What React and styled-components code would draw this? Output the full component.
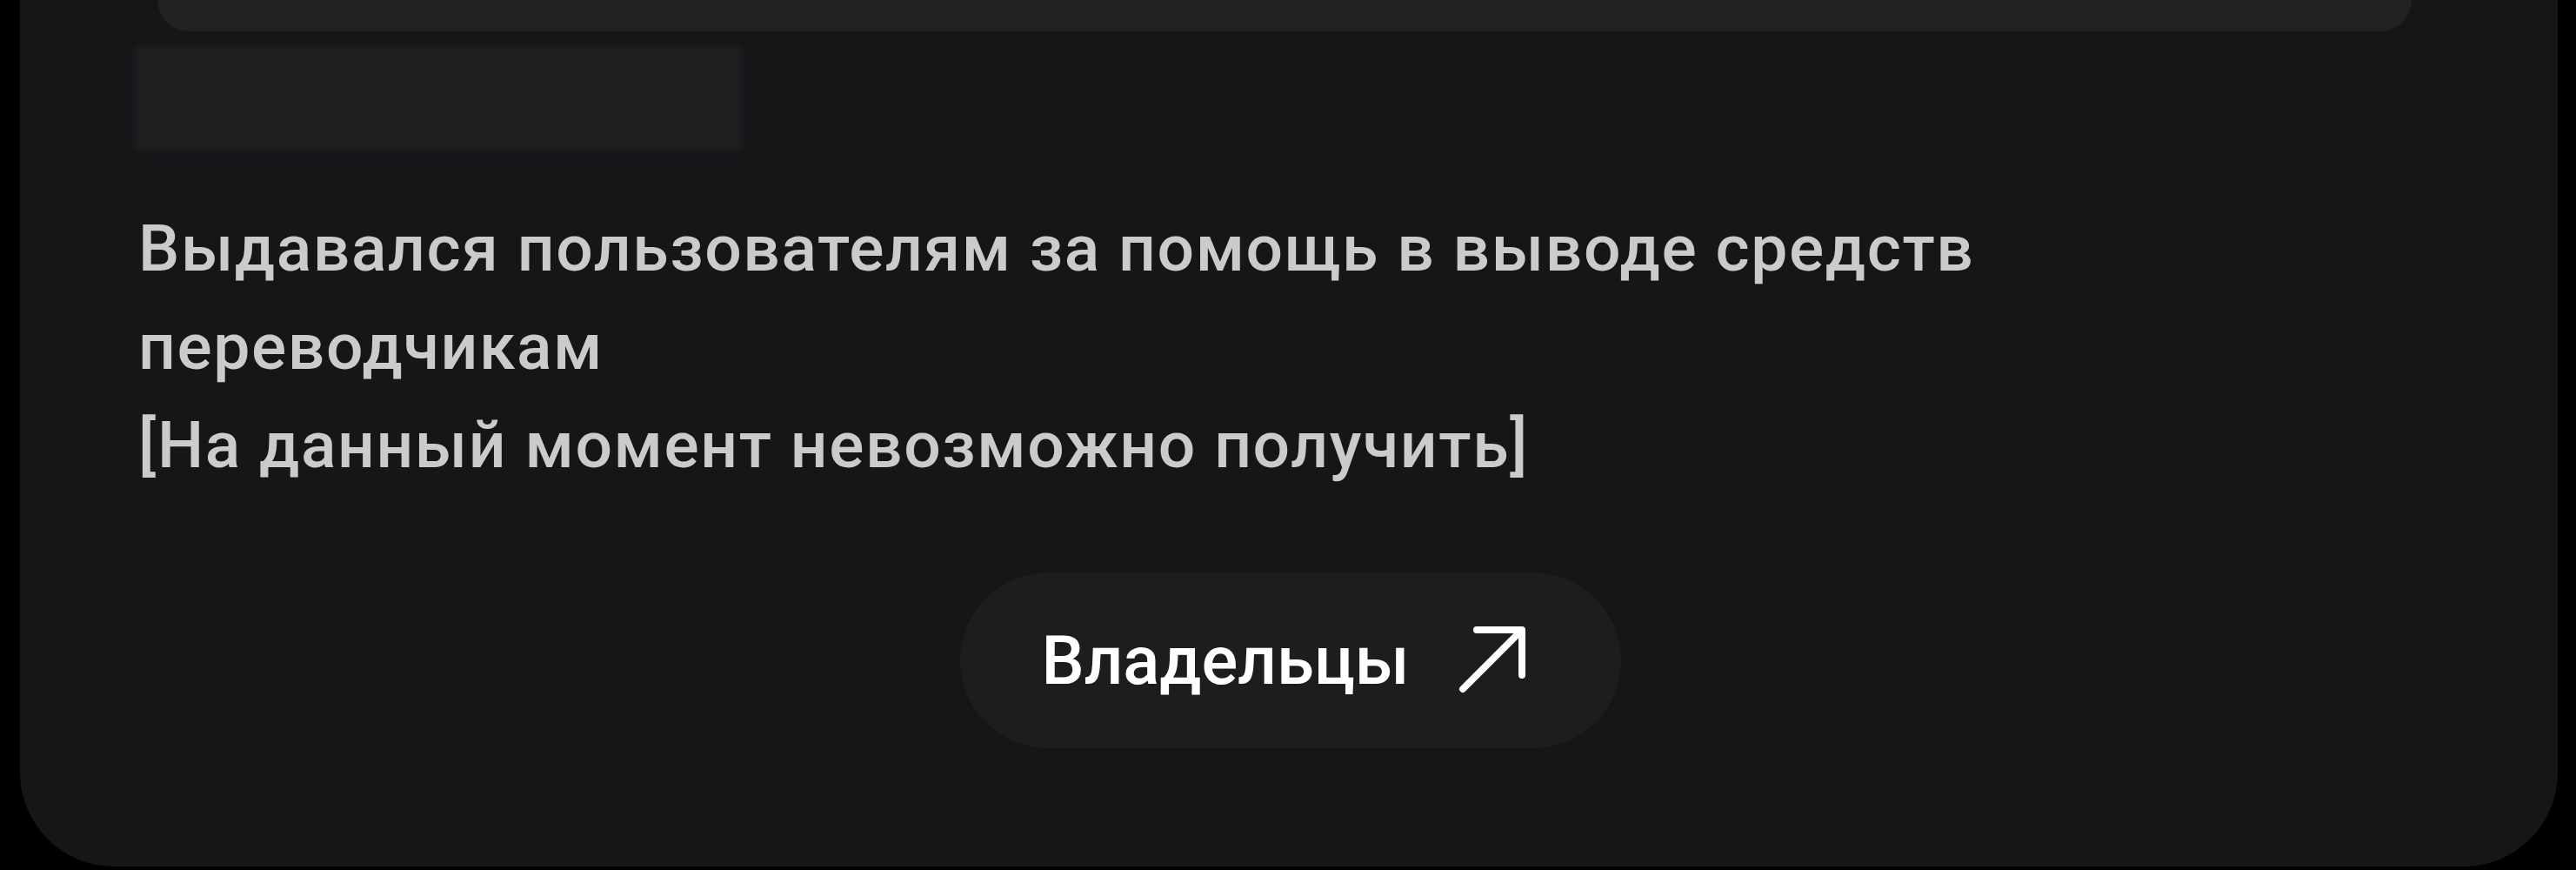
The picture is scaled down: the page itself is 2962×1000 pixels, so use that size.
import React from "react";
import styled, { createGlobalStyle } from "styled-components";

const GlobalStyle = createGlobalStyle`
  html, body {
    margin: 0;
    padding: 0;
    background: #000;
  }
  * {
    box-sizing: border-box;
  }
`;

export default function App() {
  return (
    <>
      <GlobalStyle />
      <Page>
        <Card>
          <CoverEdge />
          <HiddenTitle />
          <Description>
            Выдавался пользователям за помощь в выводе средств
            <br />
            переводчикам
            <br />
            [На данный момент невозможно получить]
          </Description>
          <OwnersButton>
            Владельцы
            <svg viewBox="0 0 80 80" fill="none" stroke="currentColor" strokeWidth="8" strokeLinecap="round" strokeLinejoin="round">
              <path d="M21 5H73V57" />
              <path d="M5 73 72 6" />
            </svg>
          </OwnersButton>
        </Card>
      </Page>
    </>
  );
}

const Page = styled.div`
  padding: 0 21px 4px 23px;
  background: #000;
`;

const Card = styled.div`
  display: flex;
  flex-direction: column;
  padding: 0 132px 136px 136px;
  background: #151618;
  border-radius: 0 0 108px 108px;
  font-family: Roboto, "Noto Sans", sans-serif;
`;

// bottom of the cover image that sits above the card body
const CoverEdge = styled.div`
  height: 36px;
  margin: 0 36px 0 22px;
  background: #202122;
  border-radius: 0 0 44px 44px;
`;

// title is hidden behind a blur
const HiddenTitle = styled.div`
  width: 699px;
  height: 121px;
  margin: 17px 0 0 -4px;
  background: #1e1f20;
  border-radius: 6px;
  filter: blur(3px);
`;

const Description = styled.p`
  margin: 55px 0 0;
  font-size: 75px;
  line-height: 113px;
  font-weight: 500;
  letter-spacing: 1.6px;
  color: #cacbcd;
`;

const OwnersButton = styled.button`
  align-self: center;
  display: flex;
  align-items: center;
  justify-content: center;
  gap: 56px;
  width: 760px;
  height: 202px;
  margin-top: 90px;
  padding: 0 14px 0 0;
  border: none;
  border-radius: 101px;
  background: #1c1d1f;
  color: #fff;
  font-family: inherit;
  font-size: 78px;
  font-weight: 500;
  cursor: pointer;

  & svg {
    width: 80px;
    height: 80px;
  }
`;
